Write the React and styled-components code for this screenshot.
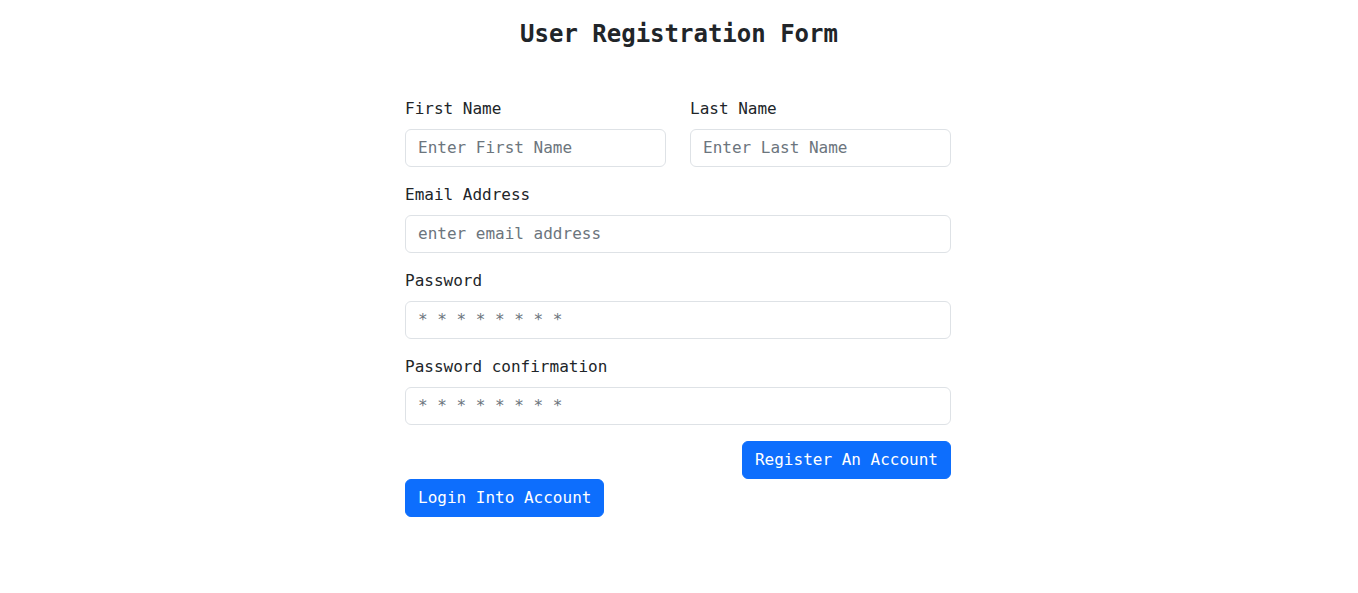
import React from 'react';
import styled, { createGlobalStyle } from 'styled-components';

const GlobalStyle = createGlobalStyle`
    body {
        margin: 0;
        background: #fff;
        color: #212529;
        font-family: "DejaVu Sans Mono", "Liberation Mono", monospace;
    }
`

const Page = styled.div`
    padding-top: 20px;
`

const Title = styled.h1`
    margin: 0 0 48px;
    text-align: center;
    font-size: 24px;
    line-height: 1.2;
    font-weight: 700;
`

const Form = styled.form`
    width: 546px;
    margin-left: calc(50% - 274px);
`

const Row = styled.div`
    display: grid;
    grid-template-columns: 1fr 1fr;
    column-gap: 24px;
`

const Group = styled.div`
    margin-bottom: 16px;
`

const Label = styled.label`
    display: block;
    font-size: 16px;
    line-height: 24px;
    margin-bottom: 8px;
`

const Input = styled.input`
    display: block;
    box-sizing: border-box;
    width: 100%;
    height: 38px;
    padding: 6px 12px;
    font-family: inherit;
    font-size: 16px;
    color: #212529;
    border: 1px solid #dee2e6;
    border-radius: 6px;
    outline: none;

    &::placeholder {
        color: #6c757d;
    }
`

const Actions = styled.div`
    display: flex;
    justify-content: ${props => props.$align === 'end' ? 'flex-end' : 'flex-start'};
`

const Button = styled.button`
    height: 38px;
    padding: 6px 12px;
    font-family: inherit;
    font-size: 16px;
    color: #fff;
    background: #0d6efd;
    border: 1px solid #0d6efd;
    border-radius: 6px;
    cursor: pointer;
`

const Field = ({ label, placeholder, type = 'text' }) => {
    return (
        <Group>
            <Label>{label}</Label>
            <Input type={type} placeholder={placeholder} />
        </Group>
    )
}

function App() {
    return (
        <Page>
            <GlobalStyle />
            <Title>User Registration Form</Title>
            <Form onSubmit={e => e.preventDefault()}>
                <Row>
                    <Field label="First Name" placeholder="Enter First Name" />
                    <Field label="Last Name" placeholder="Enter Last Name" />
                </Row>
                <Field label="Email Address" placeholder="enter email address" />
                <Field label="Password" placeholder="* * * * * * * *" />
                <Field label="Password confirmation" placeholder="* * * * * * * *" />
                <Actions $align="end">
                    <Button type="submit">Register An Account</Button>
                </Actions>
                <Actions>
                    <Button type="button">Login Into Account</Button>
                </Actions>
            </Form>
        </Page>
    );
}

export default App;
